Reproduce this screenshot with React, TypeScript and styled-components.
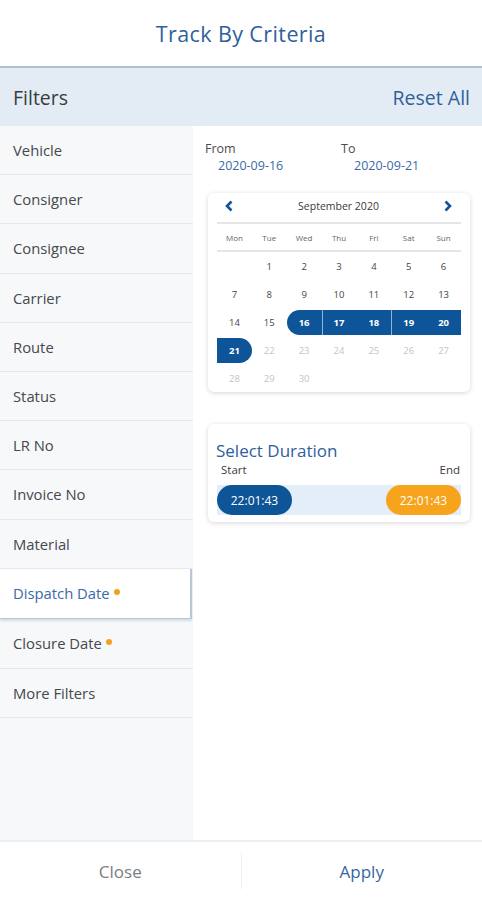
import React from "react";
import styled, { createGlobalStyle } from "styled-components";

const Global = createGlobalStyle`
  html, body { margin: 0; padding: 0; background: #fff; }
  body { font-family: "Open Sans", "Noto Sans", sans-serif; }
  * { box-sizing: border-box; }
`;

const Page = styled.div`
  width: 482px;
  height: 900px;
  display: flex;
  flex-direction: column;
  background: #fff;
  overflow: hidden;
`;

const Header = styled.div`
  height: 68px;
  display: flex;
  align-items: center;
  justify-content: center;
  font-size: 21.5px;
  letter-spacing: 0.4px;
  color: #2f609c;
  border-bottom: 2px solid #adbfd1;
  flex-shrink: 0;
`;

const FilterBar = styled.div`
  height: 58px;
  background: #e3ecf5;
  display: flex;
  align-items: center;
  justify-content: space-between;
  padding: 0 12px 0 13px;
  font-size: 19.5px;
  flex-shrink: 0;
`;

const FilterTitle = styled.span`
  color: #383c40;
`;

const ResetAll = styled.span`
  color: #2f609c;
`;

const Body = styled.div`
  flex: 1;
  display: flex;
  min-height: 0;
`;

const Sidebar = styled.div`
  width: 193px;
  background: #f7f8fa;
  display: flex;
  flex-direction: column;
  flex-shrink: 0;
`;

const Item = styled.div<{ $active?: boolean; $tall?: boolean }>`
  height: ${(p) => (p.$tall ? 50 : 49.2)}px;
  display: flex;
  align-items: center;
  padding-left: 13px;
  font-size: 14.8px;
  color: ${(p) => (p.$active ? "#3a6aa8" : "#45484c")};
  background: ${(p) => (p.$active ? "#fff" : "transparent")};
  border-bottom: 1px solid ${(p) => (p.$active ? "#b9c7d6" : "#e6e8eb")};
  border-right: ${(p) => (p.$active ? "2px solid #b9c7d6" : "none")};
  margin-right: ${(p) => (p.$active ? "1px" : "0")};
  box-shadow: ${(p) => (p.$active ? "0 2px 2px rgba(150,170,195,0.35)" : "none")};
`;

const Dot = styled.span`
  width: 6px;
  height: 6px;
  border-radius: 50%;
  background: #f5a020;
  margin-left: 4px;
  margin-top: -2px;
`;

const Main = styled.div`
  flex: 1;
  background: #fff;
  padding: 15px 12px 0 12px;
  display: flex;
  flex-direction: column;
`;

const DateRow = styled.div`
  display: flex;
`;

const DateCol = styled.div`
  width: 136px;
  display: flex;
  flex-direction: column;
`;

const DateLabel = styled.span`
  font-size: 12.5px;
  color: #4a4d52;
  line-height: 16px;
`;

const DateValue = styled.span`
  font-size: 12.5px;
  color: #3b6aa6;
  line-height: 17px;
  padding-left: 13px;
`;

const Card = styled.div<{ $mt: number }>`
  margin-top: ${(p) => p.$mt}px;
  margin-left: 3px;
  width: 262px;
  background: #fff;
  border-radius: 6px;
  box-shadow: 0 1px 5px rgba(0, 0, 0, 0.16);
`;

const CalCard = styled(Card)`
  padding: 0 9px 1px 9px;
`;

const CalHead = styled.div`
  height: 31px;
  display: flex;
  align-items: center;
  justify-content: space-between;
  padding: 0 8px 4px 7px;
  border-bottom: 2px solid #e6e6e6;
  font-size: 10.5px;
  color: #3a3a3a;
`;

const Chevron = styled.svg`
  width: 10px;
  height: 12px;
`;

const WeekRow = styled.div`
  height: 28px;
  display: grid;
  grid-template-columns: repeat(7, 1fr);
  align-items: center;
  border-bottom: 2px solid #e6e6e6;
  font-size: 8px;
  color: #666;
  text-align: center;
`;

const DayGrid = styled.div`
  display: grid;
  grid-template-columns: repeat(7, 1fr);
  grid-auto-rows: 25px;
  row-gap: 3px;
  padding-top: 2px;
`;

type DayState = "none" | "start" | "mid" | "single-end";

const Day = styled.div<{ $state: DayState; $muted?: boolean; $seam?: boolean }>`
  display: flex;
  align-items: center;
  justify-content: center;
  font-size: 9.5px;
  font-weight: ${(p) => (p.$state === "none" ? 400 : 700)};
  color: ${(p) => (p.$state !== "none" ? "#fff" : p.$muted ? "#c4c4c4" : "#444")};
  background: ${(p) => (p.$state === "none" ? "transparent" : "#0d5598")};
  border-radius: ${(p) =>
    p.$state === "start" ? "13px 0 0 13px" : p.$state === "single-end" ? "0 13px 13px 0" : "0"};
  box-shadow: ${(p) => (p.$seam ? "inset 1px 0 0 rgba(255,255,255,0.55)" : "none")};
`;

const DurCard = styled(Card)`
  padding: 16px 9px 7px 8px;
`;

const DurTitle = styled.div`
  font-size: 17px;
  color: #2f609c;
  line-height: 22px;
`;

const DurLabels = styled.div`
  display: flex;
  justify-content: space-between;
  font-size: 11.5px;
  color: #3a3a3a;
  line-height: 16px;
  padding-left: 5px;
  padding-right: 1px;
`;

const Track = styled.div`
  margin-top: 7px;
  height: 30px;
  background: #e3eef8;
  display: flex;
  justify-content: space-between;
  align-items: stretch;
  margin-left: 1px;
`;

const Pill = styled.div<{ $color: string }>`
  width: 75px;
  border-radius: 15px;
  background: ${(p) => p.$color};
  color: #fff;
  font-size: 12px;
  display: flex;
  align-items: center;
  justify-content: center;
`;

const Footer = styled.div`
  height: 60px;
  border-top: 2px solid #eceef0;
  display: flex;
  align-items: center;
  flex-shrink: 0;
`;

const FootBtn = styled.div<{ $primary?: boolean }>`
  flex: 1;
  text-align: center;
  font-size: 17px;
  color: ${(p) => (p.$primary ? "#3766a3" : "#7a7d80")};
`;

const Divider = styled.div`
  width: 1px;
  height: 36px;
  background: #eceef0;
`;

const items = [
  "Vehicle",
  "Consigner",
  "Consignee",
  "Carrier",
  "Route",
  "Status",
  "LR No",
  "Invoice No",
  "Material",
];

export default function App() {
  const days: { n: number | null; state: DayState; muted?: boolean; seam?: boolean }[] = [];
  days.push({ n: null, state: "none" });
  for (let d = 1; d <= 30; d++) {
    let state: DayState = "none";
    if (d === 16) state = "start";
    else if (d > 16 && d <= 20) state = "mid";
    else if (d === 21) state = "single-end";
    days.push({ n: d, state, muted: d > 21, seam: d === 17 || d === 19 });
  }

  return (
    <Page>
      <Global />
      <Header>Track By Criteria</Header>
      <FilterBar>
        <FilterTitle>Filters</FilterTitle>
        <ResetAll>Reset All</ResetAll>
      </FilterBar>
      <Body>
        <Sidebar>
          {items.map((t) => (
            <Item key={t}>{t}</Item>
          ))}
          <Item $active $tall>
            Dispatch Date
            <Dot />
          </Item>
          <Item $tall>
            Closure Date
            <Dot />
          </Item>
          <Item>More Filters</Item>
        </Sidebar>
        <Main>
          <DateRow>
            <DateCol>
              <DateLabel>From</DateLabel>
              <DateValue>2020-09-16</DateValue>
            </DateCol>
            <DateCol>
              <DateLabel>To</DateLabel>
              <DateValue>2020-09-21</DateValue>
            </DateCol>
          </DateRow>
          <CalCard $mt={19}>
            <CalHead>
              <Chevron viewBox="0 0 10 12">
                <path d="M7.5 1.5 L3 6 L7.5 10.5" fill="none" stroke="#0d5598" strokeWidth="2.6" />
              </Chevron>
              <span>September 2020</span>
              <Chevron viewBox="0 0 10 12">
                <path d="M2.5 1.5 L7 6 L2.5 10.5" fill="none" stroke="#0d5598" strokeWidth="2.6" />
              </Chevron>
            </CalHead>
            <WeekRow>
              {["Mon", "Tue", "Wed", "Thu", "Fri", "Sat", "Sun"].map((w) => (
                <span key={w}>{w}</span>
              ))}
            </WeekRow>
            <DayGrid>
              {days.map((d, i) => (
                <Day key={i} $state={d.state} $muted={d.muted} $seam={d.seam}>
                  {d.n ?? ""}
                </Day>
              ))}
            </DayGrid>
          </CalCard>
          <DurCard $mt={32}>
            <DurTitle>Select Duration</DurTitle>
            <DurLabels>
              <span>Start</span>
              <span>End</span>
            </DurLabels>
            <Track>
              <Pill $color="#0d5596">22:01:43</Pill>
              <Pill $color="#f7a31c">22:01:43</Pill>
            </Track>
          </DurCard>
        </Main>
      </Body>
      <Footer>
        <FootBtn>Close</FootBtn>
        <Divider />
        <FootBtn $primary>Apply</FootBtn>
      </Footer>
    </Page>
  );
}
